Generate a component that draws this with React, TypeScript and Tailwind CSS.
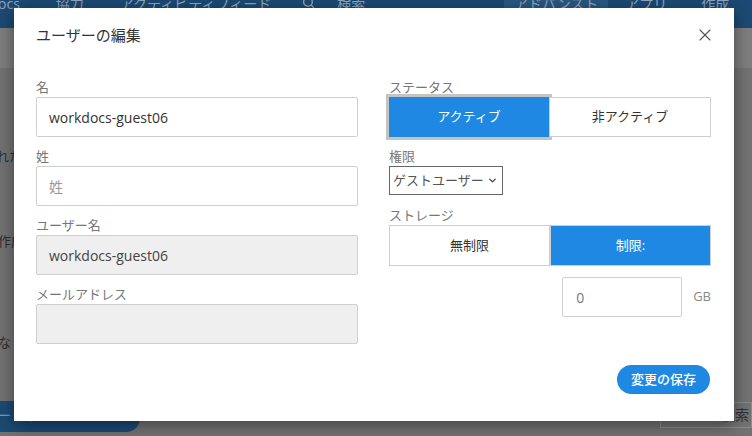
import { X, ChevronDown, Search } from "lucide-react";

const font = "font-['Open_Sans','Noto_Sans_CJK_JP',sans-serif]";

function Field({ label, value, placeholder, disabled }: { label: string; value?: string; placeholder?: string; disabled?: boolean }) {
  return (
    <div className="flex flex-col">
      <label className="h-[19px] text-[13px] leading-[19px] text-[#777]">{label}</label>
      <div
        className={`flex h-[40px] items-center rounded-[2px] border border-[#cfcfcf] px-[12px] text-[14px] ${
          disabled ? "bg-[#efefef] text-[#444]" : "bg-white text-[#333]"
        }`}
      >
        {value ? value : <span className="text-[#999]">{placeholder}</span>}
      </div>
    </div>
  );
}

function Segment({ left, right, active, focus }: { left: string; right: string; active: "left" | "right"; focus?: boolean }) {
  const on = "bg-[#1e88e3] text-white";
  const off = "bg-white text-[#333]";
  return (
    <div className="flex h-[40px] text-[13px]">
      <div
        className={`flex flex-1 items-center justify-center ${active === "left" ? on : off} ${
          focus ? "outline-[3px] outline-solid outline-[#c4c4c4]" : "border border-[#cfcfcf]"
        }`}
      >
        {left}
      </div>
      <div className={`flex flex-1 items-center justify-center border border-[#cfcfcf] ${active === "right" ? on : off}`}>
        {right}
      </div>
    </div>
  );
}

export default function App() {
  return (
    <div className={`relative h-[436px] w-[752px] overflow-hidden bg-[#737373] ${font}`}>
      {/* page behind the overlay */}
      <div className="flex h-[28px] items-start whitespace-nowrap bg-[#1c4a74] text-[14px] leading-[8px] text-[#8ea6be] [&>*]:shrink-0">
        <span className="ml-[-2px]">ocs</span>
        <span className="ml-[36px]">協力</span>
        <span className="ml-[36px]">アクティビティフィード</span>
        <Search className="ml-[31px] mt-[-4px] h-[13px] w-[13px]" strokeWidth={2.5} />
        <span className="ml-[22px]">検索</span>
        <span className="ml-[139px] h-[28px] w-[104px] bg-[#2a5880] text-center">アドバンスト</span>
        <span className="ml-[17px]">アプリ</span>
        <span className="ml-[34px]">作成</span>
      </div>
      <div className="h-[40px] bg-[#7e7e7e]" />
      <div className="flex flex-col text-[13px] text-[#2e2e2e]">
        <span className="ml-[-4px] mt-[79px]">れた</span>
        <span className="ml-[-2px] mt-[65px]">作成</span>
        <span className="ml-[-2px] mt-[82px]">な</span>
      </div>
      <div className="mt-[48px] flex items-start justify-between">
        <div className="flex h-[31px] w-[140px] items-center rounded-r-[14px] bg-[#1c4a74] text-[13px] text-[#7f97af]">
          <span className="ml-[-2px]">ー のダウンロード</span>
          <ChevronDown className="ml-[8px] h-[12px] w-[12px]" />
        </div>
        <div className="mt-[1px] flex h-[26px] w-[92px] items-center justify-end gap-[8px] border border-[#8c8c8c] pr-[2px] text-[14px] text-[#333]">
          <Search className="h-[11px] w-[11px]" />
          <span>検索</span>
        </div>
      </div>

      {/* modal */}
      <div className="absolute left-[14px] top-[8px] w-[720px] bg-white px-[23px] pb-[27px] pl-[22px] pt-[17px] shadow-[0_4px_16px_rgba(0,0,0,0.45)]">
        <div className="mb-[33px] flex h-[20px] items-center justify-between">
          <h1 className="text-[15px] font-normal leading-[20px] text-[#333]">ユーザーの編集</h1>
          <X className="mr-[-4px] h-[20px] w-[20px] text-[#555]" strokeWidth={1.4} />
        </div>

        <div className="grid grid-cols-[322px_322px] gap-x-[31px]">
          <div className="flex flex-col gap-[10px]">
            <Field label="名" value="workdocs-guest06" />
            <Field label="姓" placeholder="姓" />
            <Field label="ユーザー名" value="workdocs-guest06" disabled />
            <Field label="メールアドレス" disabled />
          </div>

          <div className="flex flex-col">
            <label className="h-[19px] text-[13px] leading-[19px] text-[#777]">ステータス</label>
            <Segment left="アクティブ" right="非アクティブ" active="left" focus />

            <label className="mt-[10px] h-[19px] text-[13px] leading-[19px] text-[#777]">権限</label>
            <div className="flex h-[29px] w-[114px] items-center justify-between border border-[#666] pl-[3px] pr-[4px] text-[13px] text-[#555]">
              <span>ゲストユーザー</span>
              <ChevronDown className="h-[11px] w-[11px] text-[#444]" strokeWidth={3} />
            </div>

            <label className="mt-[10px] h-[20px] text-[13px] leading-[20px] text-[#777]">ストレージ</label>
            <div className="flex h-[41px] text-[13px]">
              <div className="flex flex-1 items-center justify-center border border-[#cfcfcf] bg-white text-[#333]">無制限</div>
              <div className="flex flex-1 items-center justify-center border border-[#cfcfcf] bg-[#1e88e3] text-white">制限:</div>
            </div>

            <div className="mt-[11px] flex items-center justify-end gap-[11px]">
              <div className="flex h-[40px] w-[120px] items-center rounded-[2px] border border-[#cfcfcf] px-[13px] text-[14px] text-[#777]">0</div>
              <span className="text-[13px] text-[#888]">GB</span>
            </div>
          </div>
        </div>

        <div className="mt-[21px] flex justify-end">
          <button className="mr-[1px] h-[29px] rounded-full bg-[#1e88e3] px-[14px] text-[13px] font-medium text-white">変更の保存</button>
        </div>
      </div>
    </div>
  );
}
